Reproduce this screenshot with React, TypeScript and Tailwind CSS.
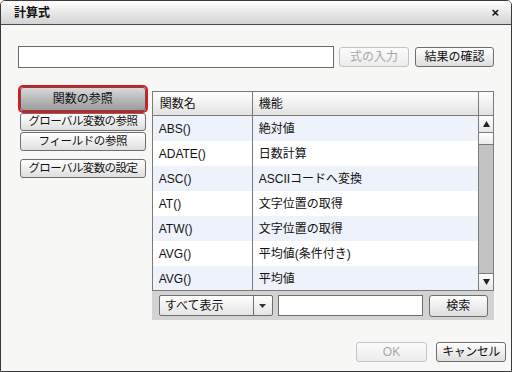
import React from "react";

const font = "font-['Liberation_Sans','Noto_Sans_CJK_JP',sans-serif]";

const rows: [string, string][] = [
  ["ABS()", "絶対値"],
  ["ADATE()", "日数計算"],
  ["ASC()", "ASCIIコードへ変換"],
  ["AT()", "文字位置の取得"],
  ["ATW()", "文字位置の取得"],
  ["AVG()", "平均値(条件付き)"],
  ["AVG()", "平均値"],
];

function Btn({
  children,
  className = "",
  disabled = false,
}: {
  children: React.ReactNode;
  className?: string;
  disabled?: boolean;
}) {
  return (
    <div
      className={
        "flex items-center justify-center whitespace-nowrap rounded-[3px] border leading-none " +
        (disabled
          ? "border-[#c4c4c4] bg-gradient-to-b from-[#fbfbfb] to-[#ececec] text-[#a8a8a8] "
          : "border-[#6f6f6f] bg-gradient-to-b from-[#ffffff] to-[#dedede] text-[#111] ") +
        className
      }
    >
      {children}
    </div>
  );
}

export default function App() {
  return (
    <div className={`${font} w-[512px] h-[372px] flex flex-col border border-[#3a3a3a] rounded-t-[5px] overflow-hidden bg-[#f7f8f6]`}>
      {/* TITLE */}
      <div className="h-[24px] shrink-0 flex items-center justify-between pl-[13px] pr-[12px] border-b border-[#4a4a4a] bg-gradient-to-b from-[#fefefe] to-[#d2d3d2]">
        <span className="text-[12px] font-bold text-[#111]">計算式</span>
        <span className="text-[13px] font-bold text-[#111] leading-none">×</span>
      </div>

      <div className="flex-1 flex flex-col px-[17px] pt-[21px]">
        {/* FORMULA ROW */}
        <div className="flex items-center h-[22px]">
          <div className="w-[316px] h-[22px] border border-[#6b6b6b] bg-white" />
          <Btn disabled className="ml-[5px] w-[70px] h-[20px] text-[12px]">式の入力</Btn>
          <Btn className="ml-[6px] w-[79px] h-[20px] text-[12px]">結果の確認</Btn>
        </div>

        <div className="flex mt-[17px]">
          {/* LEFT BUTTONS */}
          <div className="w-[130px] flex flex-col">
            <div className="border-2 border-[#e8141b] rounded-[5px] h-[28px]">
              <div className="h-[24px] flex items-center justify-center rounded-[3px] border border-[#555] bg-gradient-to-b from-[#d8d8d8] to-[#9c9c9c] text-[12px] text-[#111]">
                関数の参照
              </div>
            </div>
            <Btn className="mx-[2px] h-[18px] text-[11.5px] tracking-[-0.6px]">グローバル変数の参照</Btn>
            <Btn className="mx-[2px] h-[19px] mt-[1px] text-[11.5px] tracking-[-0.4px]">フィールドの参照</Btn>
            <Btn className="mx-[2px] h-[19px] mt-[8px] text-[11.5px] tracking-[-0.6px]">グローバル変数の設定</Btn>
          </div>

          {/* GRID */}
          <div className="ml-[4px] mt-[6px] w-[343px] flex flex-col">
            <div className="border border-[#7a7a7a] bg-white flex flex-col">
              <div className="flex h-[24px] border-b border-[#7a7a7a] bg-gradient-to-b from-[#ffffff] to-[#e2e2e2] text-[12px] text-[#111]">
                <div className="w-[100px] border-r border-[#7a7a7a] flex items-center pl-[7px]">関数名</div>
                <div className="flex-1 border-r border-[#7a7a7a] flex items-center pl-[6px]">機能</div>
                <div className="w-[14px]" />
              </div>
              <div className="flex h-[174px] overflow-hidden">
                <div className="flex-1 flex flex-col">
                  {rows.map(([name, fn], i) => (
                    <div
                      key={i}
                      className={
                        "flex shrink-0 h-[25px] text-[12px] text-[#111] whitespace-nowrap " +
                        (i % 2 === 0 ? "bg-[#eef2fa]" : "bg-white")
                      }
                    >
                      <div className="w-[100px] border-r border-[#7a7a7a] flex items-center pl-[6px]">{name}</div>
                      <div className="flex-1 flex items-center pl-[6px]">{fn}</div>
                    </div>
                  ))}
                </div>
                {/* SCROLLBAR */}
                <div className="w-[15px] border-l border-[#7a7a7a] flex flex-col bg-[#c3c3c3]">
                  <div className="h-[17px] shrink-0 border-b border-[#7a7a7a] bg-gradient-to-b from-white to-[#e6e6e6] flex items-center justify-center">
                    <svg width="7" height="6" viewBox="0 0 7 6"><path d="M3.5 0L7 6H0z" fill="#222" /></svg>
                  </div>
                  <div className="h-[12px] shrink-0 border-b border-[#7a7a7a] bg-gradient-to-b from-white to-[#ececec]" />
                  <div className="flex-1" />
                  <div className="h-[17px] shrink-0 border-t border-[#7a7a7a] bg-gradient-to-b from-white to-[#e6e6e6] flex items-center justify-center">
                    <svg width="7" height="6" viewBox="0 0 7 6"><path d="M0 0H7L3.5 6z" fill="#222" /></svg>
                  </div>
                </div>
              </div>
            </div>
            {/* FOOTER */}
            <div className="h-[29px] bg-[#d3d3d3] flex items-center pl-[7px] text-[12px]">
              <div className="flex h-[21px] w-[114px] rounded-[2px] border border-[#707070] bg-gradient-to-b from-white to-[#e4e4e4]">
                <div className="flex-1 flex items-center pl-[5px] border-r border-[#707070] text-[#111] whitespace-nowrap">すべて表示</div>
                <div className="w-[18px] flex items-center justify-center">
                  <svg width="7" height="4" viewBox="0 0 7 4"><path d="M0 0H7L3.5 4z" fill="#333" /></svg>
                </div>
              </div>
              <div className="ml-[5px] w-[145px] h-[21px] border border-[#707070] bg-white" />
              <Btn className="ml-[6px] w-[59px] h-[22px] text-[12px]">検索</Btn>
            </div>
          </div>
        </div>

        {/* BOTTOM BUTTONS */}
        <div className="flex justify-end mt-[22px] mr-[-12px]">
          <Btn disabled className="w-[71px] h-[20px] text-[12px]">OK</Btn>
          <Btn className="ml-[9px] w-[70px] h-[20px] text-[12px] tracking-[-0.5px]">キャンセル</Btn>
        </div>
      </div>
    </div>
  );
}
